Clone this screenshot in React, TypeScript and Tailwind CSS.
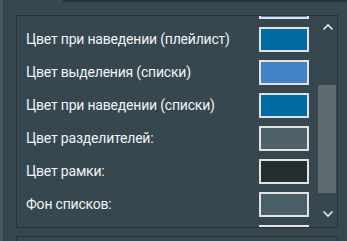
import React from 'react';

type Row = { label: string; color: string };

// first and last rows are scrolled out of view; only their swatch edges show
const rows: Row[] = [
  { label: '', color: '#4384c8' },
  { label: 'Цвет при наведении (плейлист)', color: '#006aa2' },
  { label: 'Цвет выделения (списки)', color: '#4384c8' },
  { label: 'Цвет при наведении (списки)', color: '#006aa2' },
  { label: 'Цвет разделителей:', color: '#4f6169' },
  { label: 'Цвет рамки:', color: '#252d31' },
  { label: 'Фон списков:', color: '#4b5f69' },
  { label: '', color: '#cfd8dc' },
];

const Chevron: React.FC<{ up?: boolean }> = ({ up }) => (
  <svg width="12" height="8" viewBox="0 0 12 8" className="block">
    <path
      d={up ? 'M1.5 6.5 L6 2 L10.5 6.5' : 'M1.5 1.5 L6 6 L10.5 1.5'}
      fill="none"
      stroke="#e4e9eb"
      strokeWidth="1.6"
    />
  </svg>
);

const App: React.FC = () => {
  return (
    <div
      className="flex h-[241px] w-[347px] overflow-hidden bg-[#37474f] text-[14px] text-[#eef3f5]"
      style={{ fontFamily: 'Roboto, "Noto Sans", sans-serif' }}
    >
      <div className="w-[4px] shrink-0 border-r border-[#2f3c42] bg-[#4a5960]" />
      <div className="flex flex-1 flex-col">
        <div className="ml-[59px] h-[2px] bg-[#263238]" />
        <div className="ml-[12px] mr-[9px] mt-[13px] flex h-[213px] border border-[#263238]">
          <div className="flex-1 overflow-hidden">
            <div className="-mt-[26px] pl-[9px] pr-[9px]">
              {rows.map((row, i) => (
                <div key={i} className="flex h-[33px] items-center justify-between">
                  <span className="tracking-[-0.2px]">{row.label}</span>
                  <div
                    className="h-[25px] w-[50px] border-2 border-[#e2e2e2]"
                    style={{ backgroundColor: row.color }}
                  />
                </div>
              ))}
            </div>
          </div>
          <div className="flex w-[19px] flex-col items-center">
            <div className="mt-[6px] flex h-[10px] items-center justify-center">
              <Chevron up />
            </div>
            <div className="mt-[53px] h-[108px] w-[18px] self-start bg-[#5f6b71]" />
            <div className="mt-[16px] flex h-[10px] items-center justify-center">
              <Chevron />
            </div>
          </div>
        </div>
        <div className="ml-[12px] mr-[9px] mt-[8px] flex-1 border-l border-t border-r border-[#263238]" />
      </div>
    </div>
  );
};

export default App;
